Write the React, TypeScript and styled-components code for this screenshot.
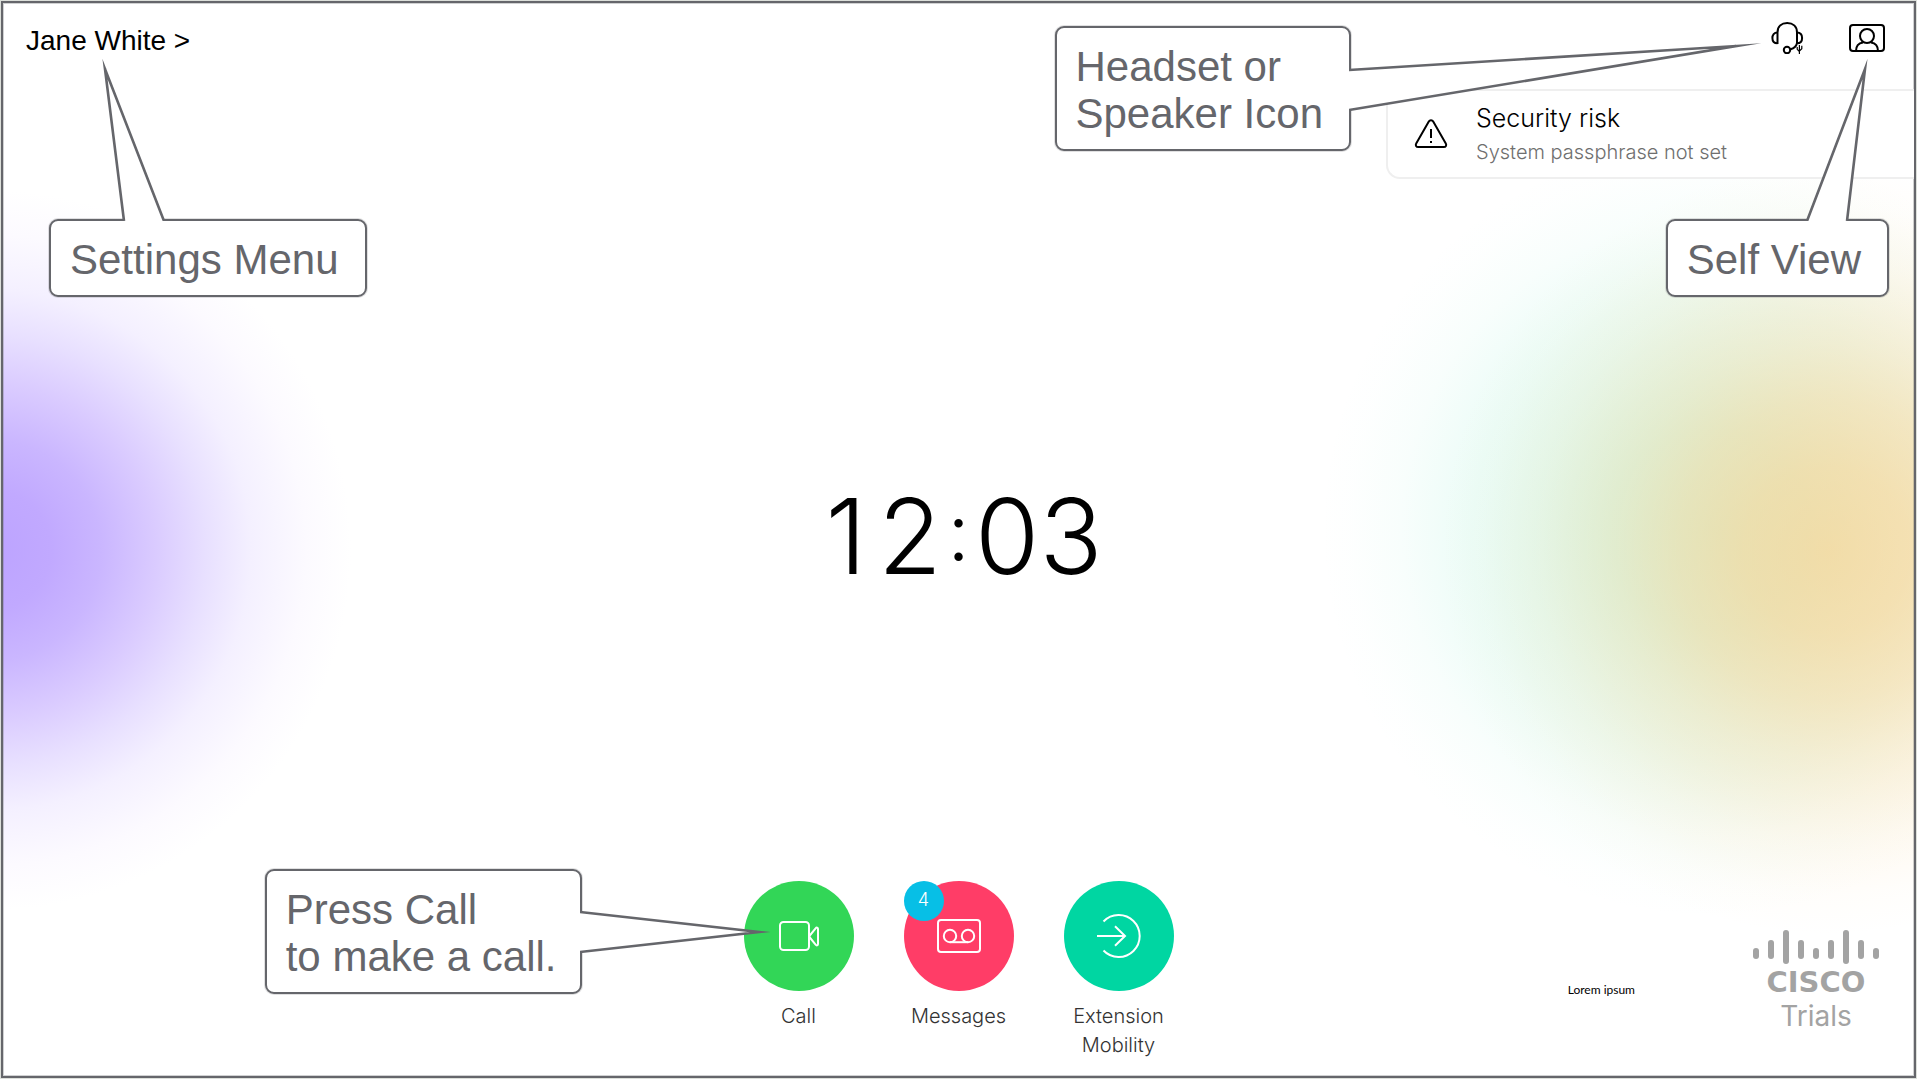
import React from "react";
import styled, { createGlobalStyle } from "styled-components";

const ink = "#65666b";
const uiFont = `Inter, "Liberation Sans", sans-serif`;
const noteFont = `"Liberation Sans", Arial, sans-serif`;

const GlobalStyle = createGlobalStyle`
  *, *::before, *::after { box-sizing: border-box; }
  body { margin: 0; background: #dcdfda; }
  button { margin: 0; padding: 0; border: 0; background: none; color: inherit; font: inherit; cursor: pointer; }
  svg { display: block; }
`;

const Page = styled.div`
  display: flex;
  min-height: 100vh;
  padding: 1px;
`;

const Screen = styled.div`
  position: relative;
  display: flex;
  flex: 1;
  flex-direction: column;
  overflow: hidden;
  border: 2px solid ${ink};
  box-shadow: inset 0 0 0 1px rgba(101, 102, 107, 0.3);
  font-family: ${uiFont};
  color: #000;
  background:
    radial-gradient(
      circle at calc(100% - 87px) 51%,
      rgba(255, 205, 130, 0.65) 0,
      rgba(255, 205, 130, 0.58) 83px,
      rgba(255, 205, 130, 0.45) 150px,
      rgba(255, 205, 130, 0.3) 207px,
      rgba(255, 205, 130, 0.12) 290px,
      rgba(255, 205, 130, 0.03) 345px,
      rgba(255, 205, 130, 0) 385px
    ),
    radial-gradient(
      circle at calc(100% - 204px) 49%,
      rgba(120, 235, 200, 0.36) 0,
      rgba(120, 235, 200, 0.31) 100px,
      rgba(120, 235, 200, 0.22) 170px,
      rgba(120, 235, 200, 0.15) 235px,
      rgba(120, 235, 200, 0.05) 310px,
      rgba(120, 235, 200, 0.01) 360px,
      rgba(120, 235, 200, 0) 390px
    ),
    radial-gradient(
      circle at -12px 51%,
      #bca3ff 0,
      #c1a9ff 60px,
      #cab6ff 110px,
      #dacbff 165px,
      #e8e0ff 215px,
      #f4f0ff 260px,
      #fcfaff 315px,
      #ffffff 360px
    ),
    #fff;
`;

const Header = styled.header`
  display: flex;
  justify-content: space-between;
  align-items: flex-start;
  padding: 19px 29px 0 23px;
`;

const AccountButton = styled.button`
  font-family: ${noteFont};
  font-size: 28px;
  line-height: 38px;
`;

const HeaderTools = styled.div`
  display: flex;
  gap: 42px;
`;

const Alert = styled.section`
  display: flex;
  align-self: flex-end;
  align-items: center;
  gap: 28px;
  width: 528px;
  height: 90px;
  margin-top: 29px;
  padding-left: 26px;
  border: 2px solid #efefef;
  border-right: 0;
  border-radius: 14px 0 0 14px;
  background: #fff;
`;

const AlertTitle = styled.h2`
  margin: 0;
  font-size: 25px;
  font-weight: 300;
  line-height: 36px;
`;

const AlertText = styled.p`
  margin: 0;
  font-size: 20px;
  font-weight: 300;
  line-height: 32px;
  color: #6f6f6f;
`;

const Main = styled.main`
  display: flex;
  flex: 1;
  align-items: center;
  justify-content: center;
  padding-top: 12px;
`;

const Clock = styled.time`
  display: flex;
  font-size: 104px;
  font-weight: 350;
  line-height: 104px;
`;

const Digit = styled.span`
  width: 64px;
  text-align: center;
`;

const Colon = styled.span`
  width: 33px;
  font-size: 80px;
  font-weight: 300;
  line-height: 96px;
  text-align: center;
`;

const Footer = styled.footer`
  display: grid;
  grid-template-columns: 1fr auto 1fr;
  align-items: end;
  padding-bottom: 16px;
`;

const AppBar = styled.nav`
  display: flex;
  grid-column: 2;
  gap: 50px;
`;

const AppItem = styled.div`
  position: relative;
  width: 110px;
`;

const AppButton = styled.button`
  display: flex;
  flex-direction: column;
  align-items: center;
  gap: 11px;
  width: 100%;
  font-size: 20px;
  font-weight: 300;
  line-height: 29px;
  color: #333;
`;

const Disc = styled.span<{ $color: string }>`
  display: flex;
  align-items: center;
  justify-content: center;
  width: 110px;
  height: 110px;
  border-radius: 50%;
  background: ${(p) => p.$color};
`;

const Badge = styled.span`
  position: absolute;
  top: 0;
  left: 0;
  width: 40px;
  height: 40px;
  border-radius: 50%;
  background: #07bfe6;
  color: #fff;
  font-size: 18px;
  line-height: 38px;
  text-align: center;
`;

const Corner = styled.div`
  display: flex;
  align-items: flex-end;
  justify-content: flex-end;
  gap: 118px;
  padding: 0 35px 28px 0;
`;

const FinePrint = styled.small`
  margin-bottom: 34px;
  font-family: Lato, sans-serif;
  font-size: 12px;
  font-weight: 400;
  line-height: 16px;
`;

const Brand = styled.div`
  display: flex;
  flex-direction: column;
  align-items: center;
  gap: 2px;
  color: #a3a3a3;
`;

const BrandName = styled.span`
  font-family: "DejaVu Sans", sans-serif;
  font-size: 29px;
  font-weight: 700;
  line-height: 32px;
`;

const BrandLine = styled.span`
  font-size: 28px;
  line-height: 32px;
`;

const Callout = styled.aside`
  position: absolute;
  padding: 15px 26px 12px 19px;
  border: 2px solid ${ink};
  border-radius: 9px;
  box-shadow: 0 0 0 1px rgba(101, 102, 107, 0.2);
  background: #fff;
  color: ${ink};
  font-family: ${noteFont};
  font-size: 42px;
  line-height: 47px;
  white-space: nowrap;
`;

const SettingsNote = styled(Callout)`
  top: 216px;
  left: 46px;
`;

const HeadsetNote = styled(Callout)`
  top: 23px;
  right: 563px;
`;

const SelfViewNote = styled(Callout)`
  top: 216px;
  right: 25px;
`;

const CallNote = styled(Callout)`
  top: -12px;
  right: calc(100% + 162px);
  padding-right: 23px;
`;

const UpTail = styled.svg<{ $left?: string; $right?: string }>`
  position: absolute;
  bottom: 100%;
  left: ${(p) => p.$left ?? "auto"};
  right: ${(p) => p.$right ?? "auto"};
`;

const SideTail = styled.svg<{ $top: string }>`
  position: absolute;
  top: ${(p) => p.$top};
  left: 100%;
`;

/* A pointer: white wedge that opens the bubble's border, with two inked edges. */
function Wedge({ points }: { points: string }) {
  return (
    <polyline points={points} fill="#fff" stroke={ink} strokeWidth="2.6" strokeMiterlimit="40" />
  );
}

function HeadsetIcon() {
  return (
    <svg width="36" height="32" viewBox="0 0 36 32" fill="none" stroke="#000" strokeWidth="2" aria-hidden="true">
      <path d="M6.500 22V10.500C6.500 4.500 10.500 1 16.200 1S26 4.500 26 10.500V21.500" />
      <path d="M6.500 10.500C3 10.500 1.400 13 1.400 16s1.600 5.300 5.100 5.300" />
      <path d="M26 10.500c3.500 0 5.100 2.500 5.100 5.500S29.500 21.300 26 21.300c-.700 3-3 5-6.500 6" />
      <circle cx="16" cy="28" r="3.200" />
      <path d="M28.400 23v9M26.200 25v2.300l2.200 2.200M30.800 23.800v3l-2.400 2.200" strokeWidth="1.200" />
    </svg>
  );
}

function SelfViewIcon() {
  return (
    <svg width="36" height="32" viewBox="0 0 36 32" fill="none" stroke="#000" strokeWidth="2" aria-hidden="true">
      <rect x="1" y="3" width="34" height="26" rx="3" />
      <circle cx="18" cy="14" r="7" />
      <path d="M7 29c0-5 2.500-8 7-8.600M29 29c0-5-2.500-8-7-8.600" />
    </svg>
  );
}

function WarningIcon() {
  return (
    <svg width="34" height="30" viewBox="0 0 34 30" fill="none" stroke="#000" strokeWidth="2" aria-hidden="true">
      <path d="M14.800 2.600 2.200 24.600c-1 1.800 0 3.400 2 3.400h25.600c2 0 3-1.600 2-3.400L19.200 2.600c-1-1.800-3.400-1.800-4.400 0Z" />
      <path d="M17 10v9M17 22v2" />
    </svg>
  );
}

function VideoIcon() {
  return (
    <svg width="44" height="44" viewBox="0 0 44 44" fill="none" stroke="#fff" strokeWidth="2" strokeLinejoin="round" aria-hidden="true">
      <rect x="3" y="8" width="29" height="28" rx="3.500" />
      <path d="M32 22.500 38.600 14.300c1-1.200 2.400-.800 2.400.700v15c0 1.500-1.400 1.900-2.400.700Z" />
    </svg>
  );
}

function VoicemailIcon() {
  return (
    <svg width="44" height="44" viewBox="0 0 44 44" fill="none" stroke="#fff" strokeWidth="2" aria-hidden="true">
      <rect x="1" y="6" width="42" height="32" rx="3" />
      <circle cx="13" cy="22" r="6.200" />
      <circle cx="31" cy="22" r="6.200" />
      <path d="M13 28.200h18" />
    </svg>
  );
}

function SignInIcon() {
  return (
    <svg width="44" height="44" viewBox="0 0 44 44" fill="none" stroke="#fff" strokeWidth="2" aria-hidden="true">
      <path d="M6.500 7.500a21 21 0 1 1 0 29" />
      <path d="M0 22h28M18 12.200 28 22l-10 9.800" />
    </svg>
  );
}

const bars = [
  [18, 11],
  [10, 19],
  [0, 34],
  [10, 19],
  [18, 11],
  [10, 19],
  [0, 34],
  [10, 19],
  [18, 11],
];

function BrandBars() {
  return (
    <svg width="126" height="34" viewBox="0 0 126 34" fill="currentColor" aria-hidden="true">
      {bars.map(([y, h], i) => (
        <rect key={i} x={i * 15} y={y} width="6" height={h} rx="3" />
      ))}
    </svg>
  );
}

export default function App() {
  return (
    <Page>
      <GlobalStyle />
      <Screen>
        <Header>
          <AccountButton type="button">Jane White &gt;</AccountButton>
          <HeaderTools>
            <button type="button" aria-label="Headset">
              <HeadsetIcon />
            </button>
            <button type="button" aria-label="Self view">
              <SelfViewIcon />
            </button>
          </HeaderTools>
        </Header>

        <Alert>
          <WarningIcon />
          <div>
            <AlertTitle>Security risk</AlertTitle>
            <AlertText>System passphrase not set</AlertText>
          </div>
        </Alert>

        <Main>
          <Clock dateTime="12:03">
            <Digit>1</Digit>
            <Digit>2</Digit>
            <Colon>:</Colon>
            <Digit>0</Digit>
            <Digit>3</Digit>
          </Clock>
        </Main>

        <Footer>
          <AppBar>
            <AppItem>
              <AppButton type="button">
                <Disc $color="#32d657">
                  <VideoIcon />
                </Disc>
                Call
              </AppButton>
              <CallNote>
                Press Call
                <br />
                to make a call.
                <SideTail $top="39px" width="196" height="44">
                  <Wedge points="0,2 179,22 0,42" />
                </SideTail>
              </CallNote>
            </AppItem>
            <AppItem>
              <AppButton type="button">
                <Disc $color="#ff3d67">
                  <VoicemailIcon />
                </Disc>
                Messages
                <Badge>4</Badge>
              </AppButton>
            </AppItem>
            <AppItem>
              <AppButton type="button">
                <Disc $color="#00d6a2">
                  <SignInIcon />
                </Disc>
                Extension Mobility
              </AppButton>
            </AppItem>
          </AppBar>
          <Corner>
            <FinePrint>Lorem ipsum</FinePrint>
            <Brand>
              <BrandBars />
              <BrandName>CISCO</BrandName>
              <BrandLine>Trials</BrandLine>
            </Brand>
          </Corner>
        </Footer>

        <SettingsNote>
          Settings Menu
          <UpTail $left="50px" width="68" height="163">
            <Wedge points="23,163 4,11 63,163" />
          </UpTail>
        </SettingsNote>
        <HeadsetNote>
          Headset or
          <br />
          Speaker Icon
          <SideTail $top="14px" width="418" height="70">
            <Wedge points="0,28 387,4 0,68" />
          </SideTail>
        </HeadsetNote>
        <SelfViewNote>
          Self View
          <UpTail $right="16px" width="66" height="163">
            <Wedge points="2,163 60,11 42,163" />
          </UpTail>
        </SelfViewNote>
      </Screen>
    </Page>
  );
}
